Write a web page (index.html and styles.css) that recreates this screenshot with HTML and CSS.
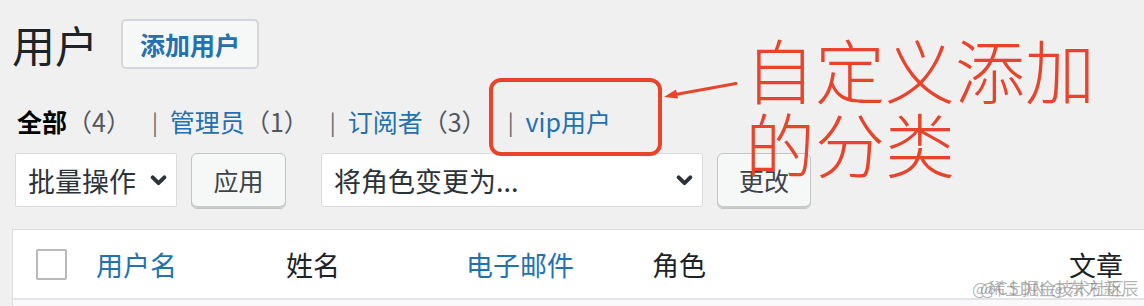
FILE: index.html
```html
<!DOCTYPE html>
<html lang="zh-CN">
<head>
<meta charset="utf-8">
<title>用户</title>
<link rel="stylesheet" href="styles.css">
</head>
<body>
<div class="wrap">
  <div class="head">
    <h1 class="title">用户</h1>
    <a class="add-btn">添加用户</a>
  </div>

  <ul class="subsubsub">
    <li class="cur">全部<span class="count">（4）</span></li>
    <li class="sep">|</li>
    <li><a>管理员</a><span class="count">（1）</span></li>
    <li class="sep">|</li>
    <li><a>订阅者</a><span class="count">（3）</span></li>
    <li class="sep">|</li>
    <li><a>vip用户</a></li>
  </ul>

  <div class="controls">
    <div class="select s1"><span>批量操作</span><svg class="chev" viewBox="0 0 16 10"><path d="M2.5 2 L8 7.5 L13.5 2" fill="none" stroke="#2c3338" stroke-width="3.6" stroke-linecap="round" stroke-linejoin="round"/></svg></div>
    <button class="btn b1">应用</button>
    <div class="select s2"><span>将角色变更为...</span><svg class="chev" viewBox="0 0 16 10"><path d="M2.5 2 L8 7.5 L13.5 2" fill="none" stroke="#2c3338" stroke-width="3.6" stroke-linecap="round" stroke-linejoin="round"/></svg></div>
    <button class="btn b2">更改</button>
  </div>

  <div class="table">
    <div class="thead">
      <div class="c cb"><span class="box"></span></div>
      <div class="c c-user"><a>用户名</a></div>
      <div class="c c-name">姓名</div>
      <div class="c c-mail"><a>电子邮件</a></div>
      <div class="c c-role">角色</div>
      <div class="c c-posts">文章</div>
    </div>
    <div class="trow"></div>
  </div>
</div>

<div class="redbox"></div>
<svg class="arrow" viewBox="0 0 80 20" width="80" height="20">
  <path d="M74 1.5 L8 13.5" stroke="#e8432b" stroke-width="3" fill="none" stroke-linecap="round"/>
  <path d="M2 15 L14 7.5 L16 16.5 Z" fill="#e8432b"/>
</svg>
<div class="note">自定义添加<br>的分类</div>
<div class="wm"><span>@稀土掘金技术社区</span><span class="wm2">@CSDN @东方新辰</span></div>
</body>
</html>
```

FILE: styles.css
```css
* { box-sizing: border-box; }
html, body { margin: 0; padding: 0; }
body {
  background: #f0f0f1;
  font-family: "Noto Sans CJK SC", "Noto Sans", sans-serif;
  color: #1d2327;
  width: 1144px;
  height: 306px;
  overflow: hidden;
  position: relative;
}
.wrap { padding-left: 12px; }

.head {
  display: flex;
  align-items: center;
  margin-top: 19px;
  height: 50px;
}
.title {
  margin: 0;
  font-size: 43px;
  font-weight: 400;
  line-height: 50px;
  color: #1d2327;
}
.add-btn {
  margin-left: 23px;
  height: 50px;
  width: 138px;
  display: flex;
  align-items: center;
  justify-content: center;
  border: 2px solid #d4d6d9;
  border-radius: 5px;
  background: #f6f7f7;
  color: #2271b1;
  font-size: 25px;
  font-weight: 600;
}

.subsubsub {
  list-style: none;
  margin: 37px 0 0 5px;
  padding: 0;
  display: flex;
  align-items: center;
  height: 30px;
  font-size: 25px;
  line-height: 30px;
  color: #50575e;
}
.subsubsub li { white-space: nowrap; }
.subsubsub .cur { font-weight: 700; color: #000; }
.subsubsub .cur .count { font-weight: 400; color: #50575e; }
.subsubsub a { color: #2271b1; }
.subsubsub .sep { color: #646970; margin: 0 12px 0 21px; font-size: 22px; }

.controls {
  display: flex;
  align-items: flex-start;
  margin: 17px 0 0 3px;
  height: 56px;
}
.select {
  height: 54px;
  background: #fff;
  border: 1px solid #dcdcde;
  border-radius: 2px;
  display: flex;
  align-items: center;
  justify-content: space-between;
  padding: 0 9px 0 12px;
  font-size: 27px;
  color: #2c3338;
}
.s1 { width: 162px; }
.s2 { width: 382px; margin-left: 35px; }
.chev { width: 17px; height: 11px; }
.btn {
  height: 56px;
  border: 1px solid #c3c4c7;
  border-radius: 6px;
  background: #f6f7f7;
  box-shadow: inset 0 -2px 0 #c8cacc;
  font-family: inherit;
  font-size: 25px;
  color: #3c434a;
  padding: 0 0 2px;
  margin-left: 14px;
}
.b1 { width: 95px; }
.b2 { width: 94px; }

.table {
  margin-top: 20px;
  background: #fff;
  border-top: 1px solid #dcdcde;
  border-left: 1px solid #dcdcde;
}
.thead {
  display: flex;
  align-items: center;
  height: 70px;
  border-bottom: 2px solid #e2e4e7;
  font-size: 27px;
  color: #1d2327;
}
.thead a { color: #2271b1; }
.c { white-space: nowrap; }
.cb { width: 83px; padding-left: 23px; display: flex; align-items: center; }
.box {
  display: block;
  width: 31px;
  height: 31px;
  border: 2px solid #b8b9bb;
  border-radius: 2px;
  background: #fff;
}
.c-user { width: 190px; }
.c-name { width: 180px; }
.c-mail { width: 186px; }
.c-role { flex: 1; }
.c-posts { padding-right: 21px; }
.trow { height: 10px; background: #f9f9f9; }

.redbox {
  position: absolute;
  left: 489px;
  top: 78px;
  width: 173px;
  height: 78px;
  border: 4px solid #e8432b;
  border-radius: 12px;
}
.arrow {
  position: absolute;
  left: 662px;
  top: 82px;
}
.note {
  position: absolute;
  left: 745px;
  top: 32px;
  font-size: 70px;
  font-weight: 300;
  line-height: 74px;
  color: #e8432b;
  white-space: nowrap;
}
.wm {
  position: absolute;
  left: 972px;
  top: 275px;
  font-size: 17px;
  line-height: 26px;
  color: rgba(110, 110, 110, 0.5);
  white-space: nowrap;
}
.wm span { display: block; }
.wm .wm2 { position: absolute; left: 8px; top: 0; letter-spacing: 1px; }
```
